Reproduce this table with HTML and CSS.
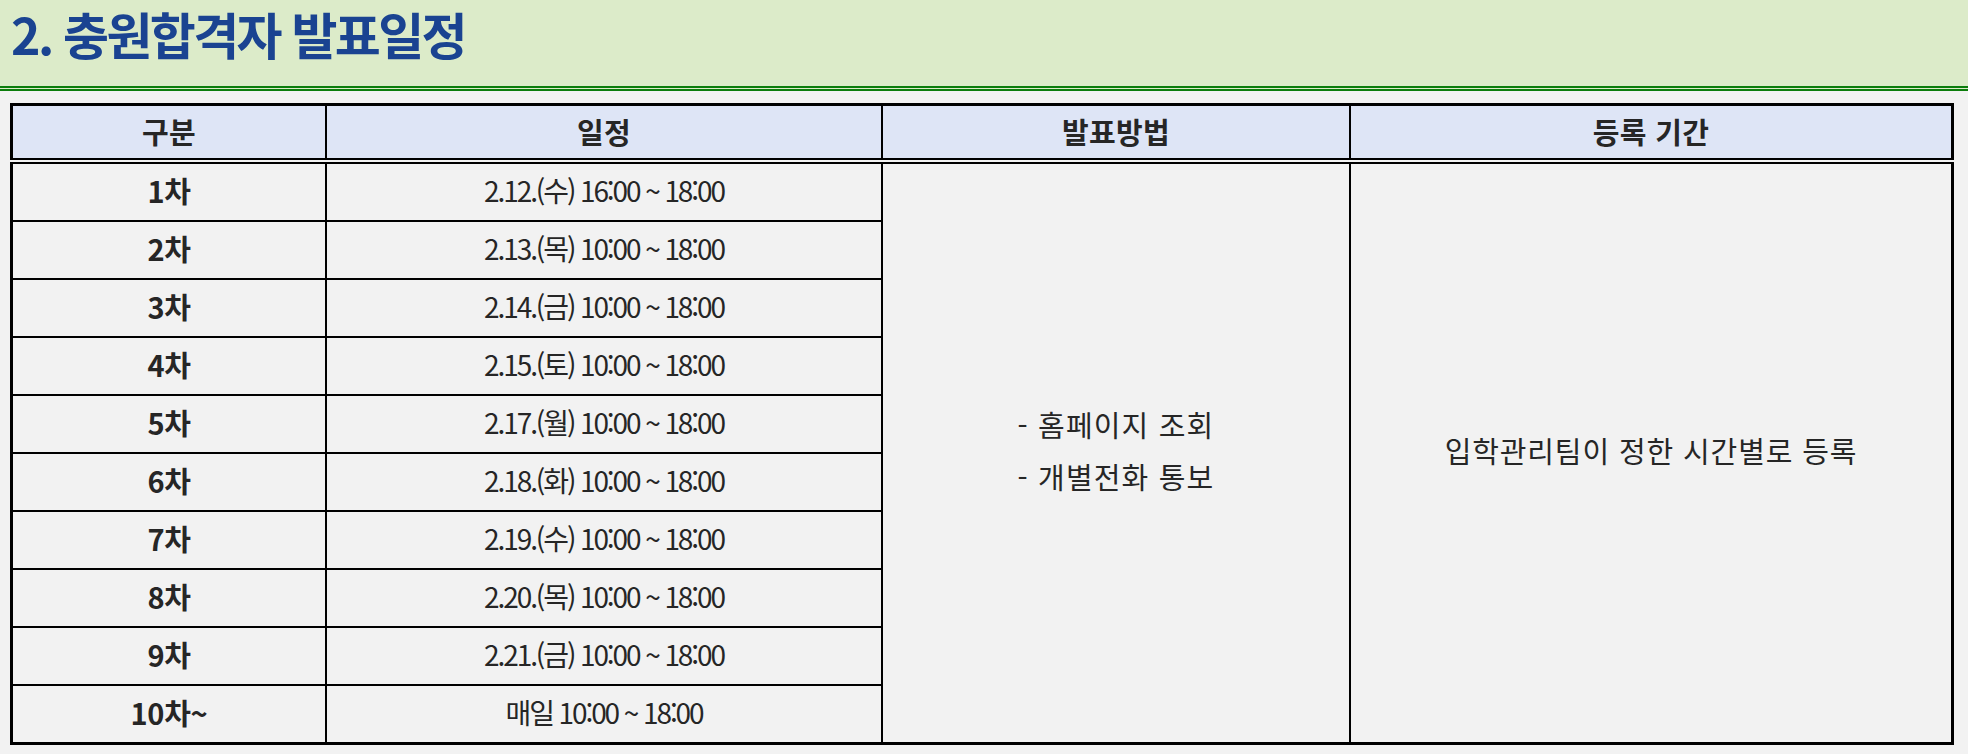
FILE: index.html
```html
<!DOCTYPE html>
<html lang="ko">
<head>
<meta charset="utf-8">
<title>충원합격자 발표일정</title>
<link rel="stylesheet" href="styles.css">
</head>
<body>
<div class="titlebar"><h2 class="title">2. 충원합격자 발표일정</h2></div>
<div class="wrap">
  <div class="thead">
    <div class="th">구분</div>
    <div class="th">일정</div>
    <div class="th">발표방법</div>
    <div class="th">등록 기간</div>
  </div>
  <div class="tbody">
    <div class="td round">1차</div><div class="td date">2.12.(수) 16:00 ~ 18:00</div>
    <div class="td method"><p>- 홈페이지 조회</p><p>- 개별전화 통보</p></div>
    <div class="td reg">입학관리팀이 정한 시간별로 등록</div>
    <div class="td round">2차</div><div class="td date">2.13.(목) 10:00 ~ 18:00</div>
    <div class="td round">3차</div><div class="td date">2.14.(금) 10:00 ~ 18:00</div>
    <div class="td round">4차</div><div class="td date">2.15.(토) 10:00 ~ 18:00</div>
    <div class="td round">5차</div><div class="td date">2.17.(월) 10:00 ~ 18:00</div>
    <div class="td round">6차</div><div class="td date">2.18.(화) 10:00 ~ 18:00</div>
    <div class="td round">7차</div><div class="td date">2.19.(수) 10:00 ~ 18:00</div>
    <div class="td round">8차</div><div class="td date">2.20.(목) 10:00 ~ 18:00</div>
    <div class="td round">9차</div><div class="td date">2.21.(금) 10:00 ~ 18:00</div>
    <div class="td round">10차~</div><div class="td date">매일 10:00 ~ 18:00</div>
  </div>
</div>
</body>
</html>
```
FILE: styles.css
```css
html, body {
  margin: 0;
  padding: 0;
}
body {
  background: #f2f2f2;
  font-family: "Noto Sans CJK KR", "Noto Sans", sans-serif;
  color: #262626;
  width: 1968px;
  height: 754px;
  overflow: hidden;
}
.titlebar {
  height: 86px;
  background: #dcebc9;
  border-bottom: 5px double #0b7d0b;
  display: flex;
  align-items: center;
  padding-left: 11px;
}
.title {
  margin: 0 0 20px 0;
  font-size: 50px;
  font-weight: 700;
  letter-spacing: -0.052em;
  color: #1a4391;
  line-height: 1;
}
.wrap {
  margin: 12px 0 0 10px;
  width: 1944px;
}
.thead, .tbody {
  display: grid;
  grid-template-columns: 312px 554px 466px 600px;
  column-gap: 2px;
  row-gap: 2px;
  background: #000;
  border: 3px solid #000;
}
.thead {
  border-bottom-width: 2px;
  grid-template-rows: 52px;
}
.tbody {
  margin-top: 2px;
  border-top-width: 2px;
  grid-template-rows: repeat(10, 56px);
}
.th, .td {
  display: flex;
  align-items: center;
  justify-content: center;
  text-align: center;
  box-sizing: border-box;
}
.th {
  background: #dee5f6;
  font-size: 29px;
  font-weight: 700;
  letter-spacing: 0.01em;
  color: #262626;
  padding-bottom: 2px;
}
.td {
  background: #f2f2f2;
  padding-bottom: 5px;
}
.round {
  font-size: 29px;
  font-weight: 700;
  letter-spacing: -0.01em;
  grid-column: 1;
}
.date {
  font-size: 28px;
  letter-spacing: -0.075em;
  grid-column: 2;
}
.method {
  grid-column: 3;
  grid-row: 1 / span 10;
  flex-direction: column;
  font-size: 29px;
  letter-spacing: 0.04em;
  padding-bottom: 7px;
}
.method p {
  margin: 0;
  line-height: 52px;
}
.reg {
  grid-column: 4;
  grid-row: 1 / span 10;
  font-size: 29px;
  letter-spacing: 0.03em;
  padding-bottom: 7px;
}
```
